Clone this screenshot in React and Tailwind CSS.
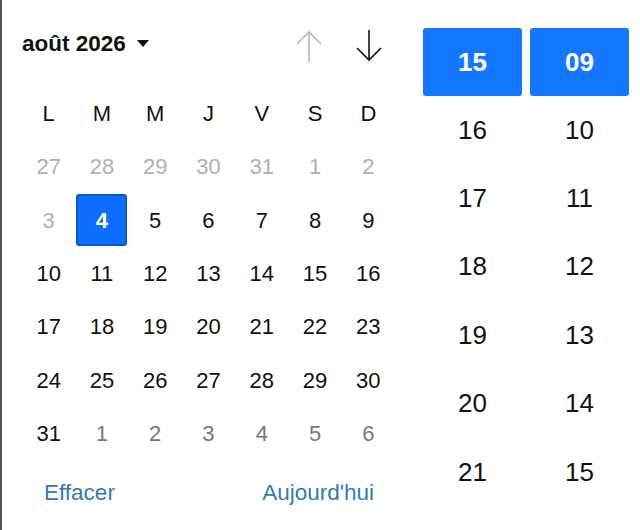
import React from "react";

const weekDays = ["L", "M", "M", "J", "V", "S", "D"];

const weeks = [
  [27, 28, 29, 30, 31, 1, 2],
  [3, 4, 5, 6, 7, 8, 9],
  [10, 11, 12, 13, 14, 15, 16],
  [17, 18, 19, 20, 21, 22, 23],
  [24, 25, 26, 27, 28, 29, 30],
  [31, 1, 2, 3, 4, 5, 6],
];

const hours = ["16", "17", "18", "19", "20", "21"];
const minutes = ["10", "11", "12", "13", "14", "15"];

function dayClass(week, value) {
  if (week === 0) return "text-[#b0b0b0]";
  if (week === 1 && value === 3) return "text-[#b0b0b0]";
  if (week === 5 && value < 10) return "text-[#777]";
  return "text-[#111]";
}

function Arrow({ up, color }) {
  return (
    <svg width="28" height="34" viewBox="0 0 28 34" fill="none" stroke={color} strokeWidth="1.6">
      {up ? (
        <>
          <line x1="14" y1="3" x2="14" y2="33" />
          <polyline points="2,15 14,3 26,15" />
        </>
      ) : (
        <>
          <line x1="14" y1="1" x2="14" y2="31" />
          <polyline points="2,19 14,31 26,19" />
        </>
      )}
    </svg>
  );
}

export default function App() {
  return (
    <div
      className="w-[640px] h-[530px] bg-white flex border-l-2 border-[#555] overflow-hidden"
      style={{ fontFamily: '"Liberation Sans", Arial, sans-serif' }}
    >
      <div className="w-[373px] ml-[20px] flex flex-col">
        <div className="h-[87px] flex items-center justify-between">
          <div className="flex items-center gap-[11px] text-[22.5px] font-bold text-[#111]">
            août 2026
            <span className="w-0 h-0 border-l-[6px] border-r-[6px] border-t-[7px] border-l-transparent border-r-transparent border-t-[#111]" />
          </div>
          <div className="flex items-center gap-[32px] mr-[12px] mt-[4px]">
            <Arrow up color="#b8b8b8" />
            <Arrow color="#111" />
          </div>
        </div>

        <div className="grid grid-cols-7 h-[53.3px] text-[22px] text-[#111]">
          {weekDays.map((d, i) => (
            <div key={i} className="flex items-center justify-center">
              {d}
            </div>
          ))}
        </div>

        {weeks.map((week, wi) => (
          <div key={wi} className="grid grid-cols-7 h-[53.3px] text-[22px]">
            {week.map((value, di) => {
              const selected = wi === 1 && value === 4;
              return (
                <div key={di} className="flex items-center justify-center">
                  {selected ? (
                    <div className="w-[51px] h-[52px] rounded-[3px] bg-[#0d6efd] border-2 border-[#0a58ca] text-white font-bold flex items-center justify-center">
                      {value}
                    </div>
                  ) : (
                    <span className={dayClass(wi, value)}>{value}</span>
                  )}
                </div>
              );
            })}
          </div>
        ))}

        <div className="h-[65px] flex items-center justify-between pl-[22px] pr-[21px] text-[22.5px] text-[#337ab7]">
          <span>Effacer</span>
          <span>Aujourd'hui</span>
        </div>
      </div>

      <div className="ml-[28px] pt-[28px] flex gap-[8px]">
        {[{ top: "15", list: hours }, { top: "09", list: minutes }].map((col) => (
          <div key={col.top} className="w-[99px] flex flex-col">
            <div className="h-[68px] rounded-[3px] bg-[#1477ff] text-white font-bold text-[26px] flex items-center justify-center">
              {col.top}
            </div>
            {col.list.map((n) => (
              <div key={n} className="h-[68.4px] flex items-center justify-center text-[26px] text-[#111]">
                {n}
              </div>
            ))}
          </div>
        ))}
      </div>
    </div>
  );
}
